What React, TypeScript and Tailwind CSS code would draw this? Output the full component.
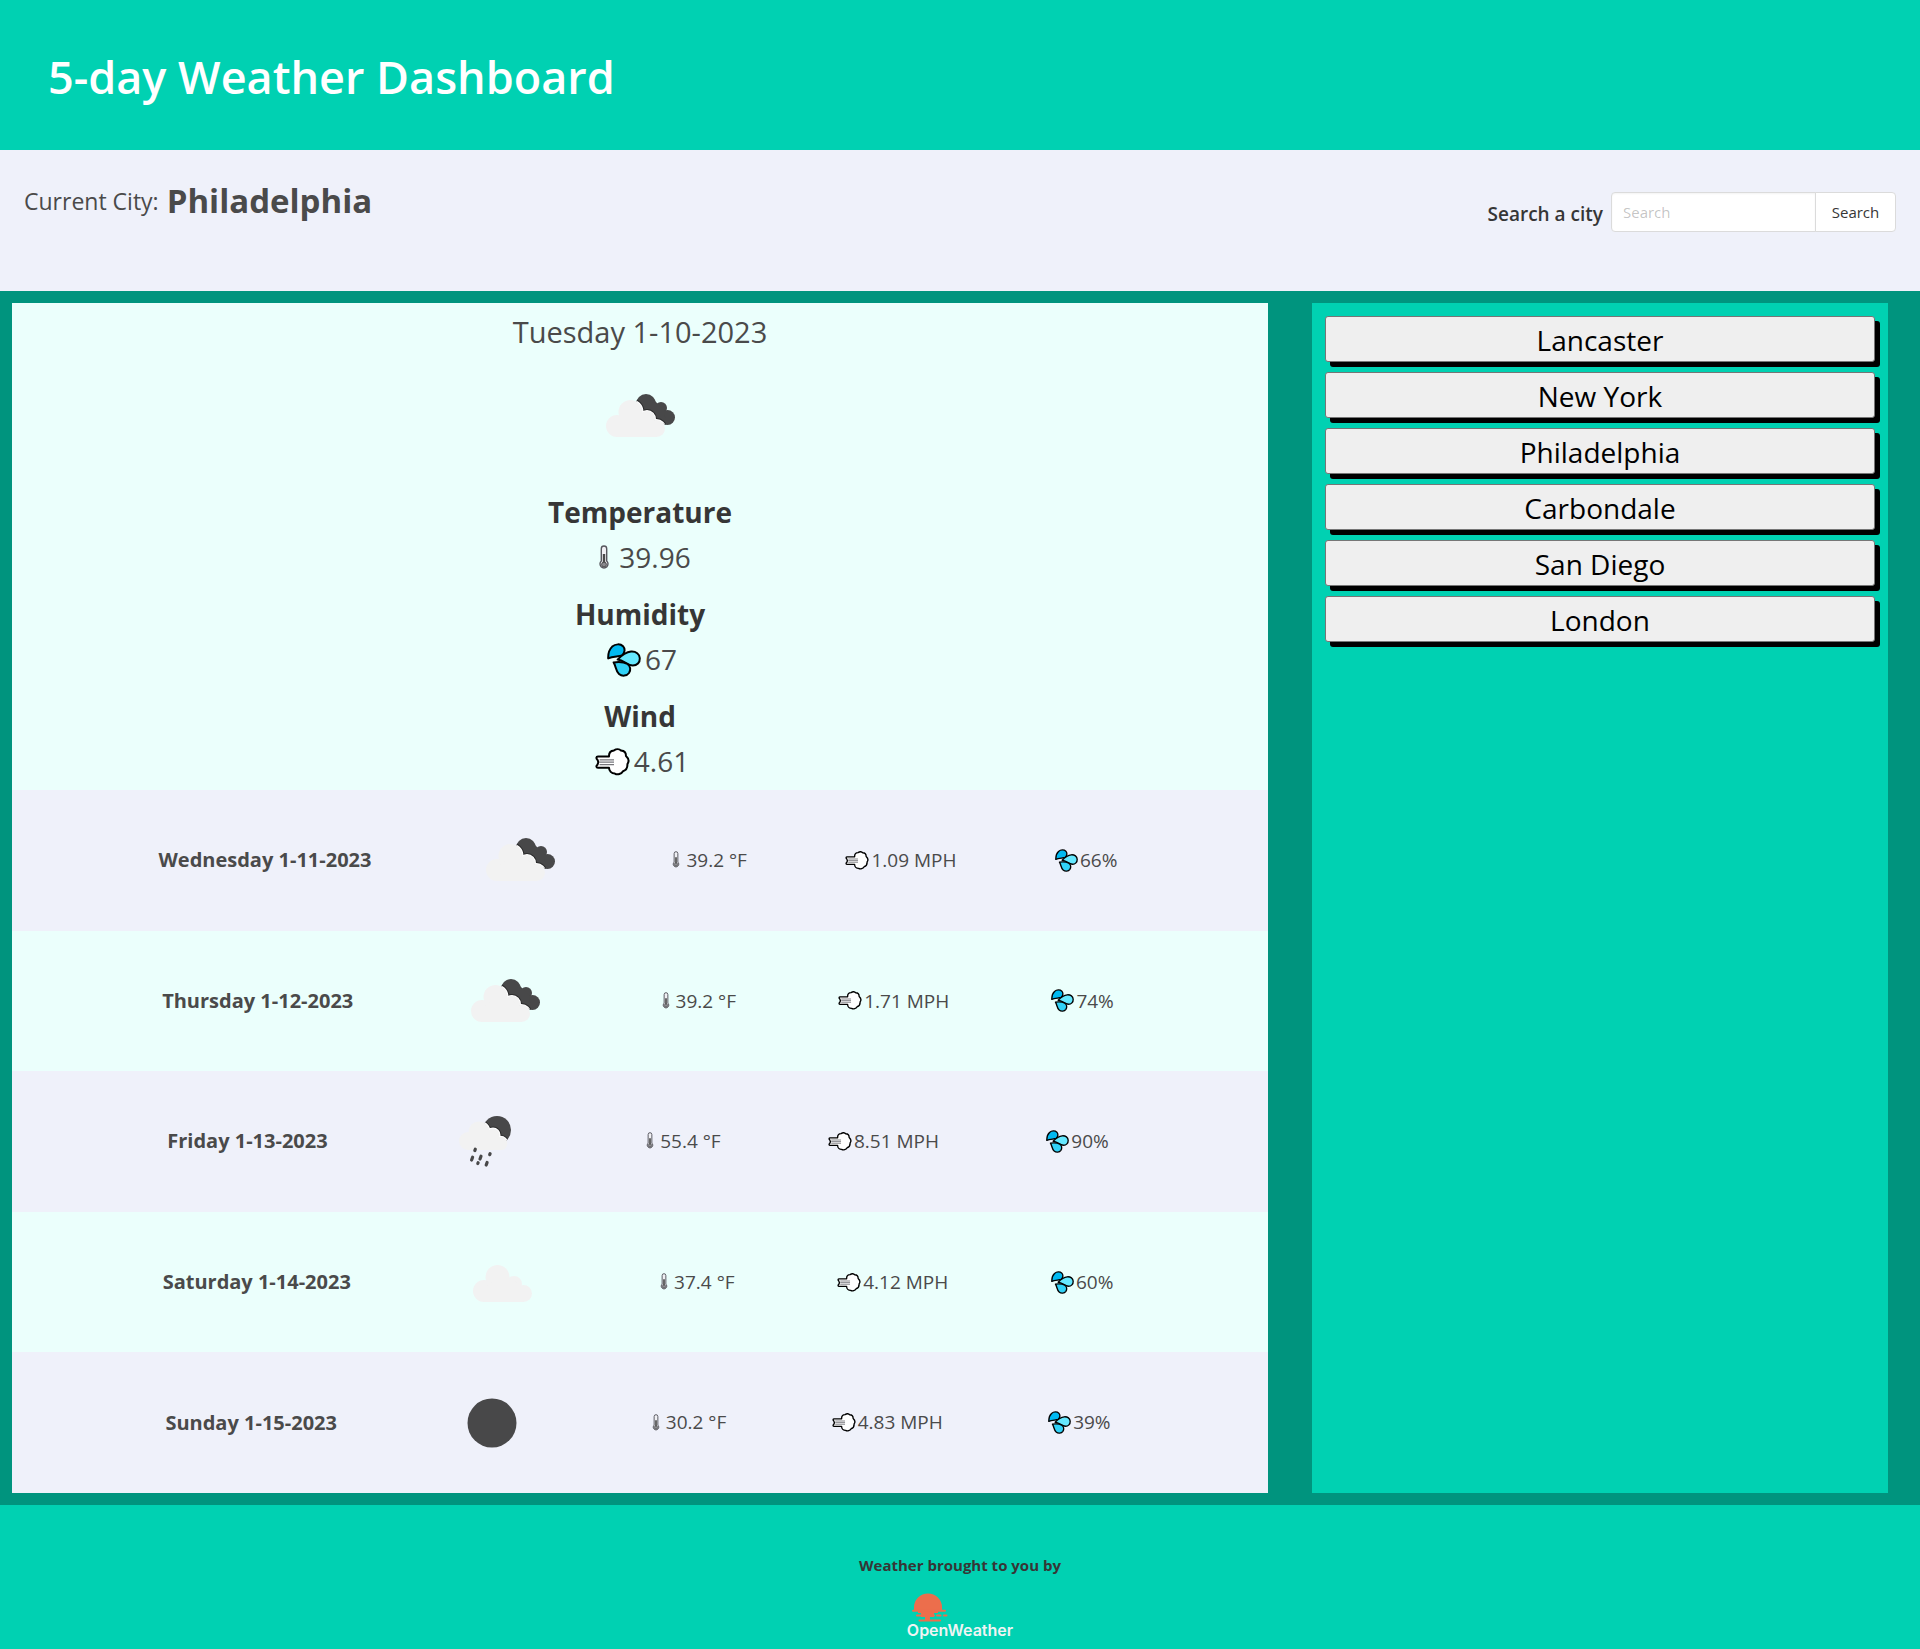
import type { ReactNode } from "react";

type Sky = "broken" | "cloud" | "rain" | "moon";

const cities = ["Lancaster", "New York", "Philadelphia", "Carbondale", "San Diego", "London"];

const forecast: { date: string; sky: Sky; temp: string; wind: string; humidity: string }[] = [
  { date: "Wednesday 1-11-2023", sky: "broken", temp: "39.2", wind: "1.09", humidity: "66" },
  { date: "Thursday 1-12-2023", sky: "broken", temp: "39.2", wind: "1.71", humidity: "74" },
  { date: "Friday 1-13-2023", sky: "rain", temp: "55.4", wind: "8.51", humidity: "90" },
  { date: "Saturday 1-14-2023", sky: "cloud", temp: "37.4", wind: "4.12", humidity: "60" },
  { date: "Sunday 1-15-2023", sky: "moon", temp: "30.2", wind: "4.83", humidity: "39" },
];

function BigCloud() {
  return (
    <>
      <circle cx="27" cy="60" r="11" />
      <circle cx="40.5" cy="46" r="12" />
      <circle cx="57" cy="53" r="8" />
      <circle cx="66.5" cy="62.5" r="8.5" />
      <path d="M27 71H66.5V58L56 48H38L27 58Z" />
    </>
  );
}

function DarkPuffs() {
  return (
    <>
      <circle cx="56" cy="38" r="10" />
      <circle cx="71" cy="42" r="6" />
      <circle cx="77.5" cy="51.5" r="7.5" />
      <path d="M56 48L64 34L74 44L76 58L66 55Z" />
    </>
  );
}

function RainCloud() {
  return (
    <>
      <circle cx="30" cy="50" r="9" />
      <circle cx="41" cy="41" r="10.5" />
      <circle cx="55" cy="44" r="6.5" />
      <circle cx="62.5" cy="52.5" r="6.8" />
      <path d="M30 59H62.5V47L54 40H40L30 48Z" />
    </>
  );
}

function SkyIcon({ sky, id }: { sky: Sky; id: string }) {
  return (
    <svg viewBox="0 0 100 100" className="size-[100px] shrink-0" aria-hidden="true">
      {sky === "broken" && (
        <>
          <clipPath id={id}>
            <DarkPuffs />
          </clipPath>
          <g fill="#484849">
            <DarkPuffs />
          </g>
          <g clipPath={`url(#${id})`}>
            <g fill="#2c2c2d" stroke="#2c2c2d" strokeWidth="4">
              <BigCloud />
            </g>
            <g fill="#fff" stroke="#fff" strokeWidth="2">
              <BigCloud />
            </g>
          </g>
          <g fill="#f2f2f2">
            <BigCloud />
          </g>
        </>
      )}
      {sky === "cloud" && (
        <g fill="#f2f2f2" transform="translate(4 -1)">
          <BigCloud />
        </g>
      )}
      {sky === "moon" && <circle cx="50" cy="50" r="24.5" fill="#484849" />}
      {sky === "rain" && (
        <g transform="translate(3 0)">
          <clipPath id={id}>
            <circle cx="59" cy="39" r="14" />
          </clipPath>
          <circle cx="59" cy="39" r="14" fill="#484849" />
          <g clipPath={`url(#${id})`}>
            <g fill="#2c2c2d" stroke="#2c2c2d" strokeWidth="4">
              <RainCloud />
            </g>
            <g fill="#fff" stroke="#fff" strokeWidth="2">
              <RainCloud />
            </g>
          </g>
          <g fill="#f2f2f2">
            <RainCloud />
          </g>
          <g stroke="#484849" strokeWidth="3.2" strokeLinecap="round">
            <path d="M37.3 58.2L36.8 59.6M34.6 66.2L33.6 69M43 65.2L42 68M52.1 62.7L51.7 63.7M40.1 71.7L39.8 72.5M49.1 71.4L48.2 74" />
          </g>
        </g>
      )}
    </svg>
  );
}

function Thermometer({ className }: { className: string }) {
  return (
    <svg viewBox="0 0 10 26" className={className} fill="none" aria-hidden="true">
      <path d="M2.3 16V3.7a2.7 2.7 0 0 1 5.4 0V16a4 4 0 1 1-5.4 0Z" fill="#f0f0f4" stroke="#57575e" strokeWidth="1.4" />
      <path d="M5 9v10" stroke="#4a4a4a" strokeWidth="2.4" />
      <circle cx="5" cy="19.5" r="2.4" fill="#8b8b90" stroke="#4a4a4a" />
    </svg>
  );
}

function Droplets({ className }: { className: string }) {
  return (
    <svg viewBox="0 0 34 34" className={className} stroke="#000" strokeWidth="2" strokeLinejoin="round" aria-hidden="true">
      <path d="M1.2 15.4C1 10.5 2.4 6.3 5.2 3.6C8.5.8 13.4.6 16 3.2C18.5 6 17.8 10 15 12.4C11.5 13.8 6 13.2 1.2 15.4Z" fill="#00b9f1" />
      <path d="M10.6 16.6C14 13 18.6 9.1 24 8.6C29 8.2 32.6 11 32.8 15.2C33 19.6 30 22.6 25.8 22.6C20.5 22.4 17 17.4 10.6 16.6Z" fill="#66e8ff" />
      <path d="M6.6 19.4C12 18.6 17 19 20.4 21C23.6 23 24 27 22 30C19.8 33 15.2 33.6 12 31C8.6 28.2 9.2 23.4 6.6 19.4Z" fill="#31d2f7" />
    </svg>
  );
}

function Gust({ className }: { className: string }) {
  return (
    <svg viewBox="0 0 35 28" className={className} stroke="#000" strokeWidth="2" strokeLinejoin="round" strokeLinecap="round" aria-hidden="true">
      <path
        d="M14 8.6C13.8 5 15.8 2.6 19 2.4C21.4.8 24.4.8 26 2.6C29 2.8 31 5 31 8C33.6 10.4 34.2 13.6 32.4 16C32.6 19.4 31 22.4 28 23.2C26.4 26 22.6 27.2 19.8 25.6C16.6 25.6 14 23 14 19.8H3C1 19.8 1 17.6 2.4 16.8L3.4 14.2L2.4 11.6C1 10.6 1 8.6 3 8.6Z"
        fill="#fff"
      />
      <path d="M4.6 11.8H19M4.6 14.2H19M4.6 16.6H19" stroke="#77777c" strokeWidth="1.3" strokeLinecap="butt" />
    </svg>
  );
}

function CurrentReading({ title, children }: { title: string; children: ReactNode }) {
  return (
    <section className="flex flex-col items-center">
      <h2 className="font-bold text-[#363636]">{title}</h2>
      <p className="flex items-center">{children}</p>
    </section>
  );
}

export default function App() {
  return (
    <div className="flex min-h-screen flex-col bg-[#00947e] font-['Open_Sans','Noto_Sans',sans-serif] text-[#4a4a4a]">
      <header className="flex h-[150px] items-center bg-[#00d1b2] px-12 pt-1">
        <h1 className="text-[45px] font-semibold text-white">5-day Weather Dashboard</h1>
      </header>

      <div className="flex h-[141px] items-start justify-between bg-[#eff1fa] px-6 pt-6">
        <p className="flex items-center gap-2 text-[23px]">
          Current City: <strong className="text-[33px] leading-[54px] font-bold">Philadelphia</strong>
        </p>
        <form className="flex items-center pt-[18px]" onSubmit={(e) => e.preventDefault()}>
          <label htmlFor="city" className="pt-1 pr-2 text-[19px] font-semibold text-[#363636]">
            Search a city
          </label>
          <input
            id="city"
            type="text"
            placeholder="Search"
            className="h-10 w-[205px] rounded-l border border-[#dbdbdb] bg-white px-[11px] text-[15px] shadow-[inset_0_1px_2px_rgba(10,10,10,0.05)] outline-none placeholder:text-[#363636]/30"
          />
          <button type="submit" className="-ml-px h-10 w-[81px] rounded-r border border-[#dbdbdb] bg-white text-[15px] text-[#363636]">
            Search
          </button>
        </form>
      </div>

      <main className="grid flex-1 grid-cols-[1256fr_576fr] gap-11 py-3 pr-8 pl-3 text-[28px]">
        <div className="flex flex-col bg-[#ebfffc]">
          <div className="flex flex-col items-center pt-1.5 pb-1.5 leading-[45px]">
            <p className="text-[29px]">Tuesday 1-10-2023</p>
            <div className="pt-3 pb-6">
              <SkyIcon sky="broken" id="today" />
            </div>
            <div className="flex flex-col gap-3">
              <CurrentReading title="Temperature">
                <Thermometer className="mr-2.5 ml-2.5 h-[26px] w-[10px]" />
                39.96
              </CurrentReading>
              <CurrentReading title="Humidity">
                <Droplets className="mr-1 ml-1 size-[34px]" />
                67
              </CurrentReading>
              <CurrentReading title="Wind">
                <Gust className="mr-1 ml-1 h-[28px] w-[35px]" />
                4.61
              </CurrentReading>
            </div>
          </div>
          <ul className="grid flex-1 auto-rows-fr text-[19px]">
            {forecast.map((day) => (
              <li key={day.date} className="flex items-center justify-evenly px-12 py-5 odd:bg-[#eff1fa]">
                <span className="text-xl font-bold">{day.date}</span>
                <SkyIcon sky={day.sky} id={day.date.split(" ")[0]} />
                <span className="flex items-center">
                  <Thermometer className="mr-1.5 ml-1 h-[18px] w-[8px]" />
                  {day.temp} °F
                </span>
                <span className="flex items-center">
                  <Gust className="mr-0.5 h-[19px] w-[24px]" />
                  {day.wind} MPH
                </span>
                <span className="flex items-center pr-1">
                  <Droplets className="mr-0.5 size-[23px]" />
                  {day.humidity}%
                </span>
              </li>
            ))}
          </ul>
        </div>
        <aside className="flex flex-col gap-2.5 bg-[#00d1b2] p-[13px]">
          {cities.map((city) => (
            <button
              key={city}
              type="button"
              className="h-[46px] rounded-[3px] border border-[#767676] bg-[#efefef] pt-0.5 leading-[42px] text-black shadow-[5px_5px_0_#000]"
            >
              {city}
            </button>
          ))}
        </aside>
      </main>

      <footer className="flex h-36 flex-col items-center bg-[#00d1b2] pt-12">
        <p className="text-[15px] leading-6 font-bold text-[#363636]">Weather brought to you by</p>
        <a href="#openweather" className="flex flex-col pt-4">
          <svg viewBox="0 0 38 29" className="ml-1 h-[29px] w-[38px]" aria-hidden="true">
            <path d="M3 17.5V14.5a14 14 0 0 1 28 0V17.5Z" fill="#ec6e4c" />
            <path d="M7 17h20v3h-4v4h-4v3h-5v-3h-4v-4H7Z" fill="#ec6e4c" />
            <path d="M2 17.8H34M6 22.4H23M26 22.4H29.5M33 22.4H35.5M8.5 27.4H29" stroke="#ec6e4c" strokeWidth="2" strokeLinecap="round" />
          </svg>
          <span className="font-['Inter',sans-serif] text-base leading-4 font-semibold text-[#f0f4f4]">OpenWeather</span>
        </a>
      </footer>
    </div>
  );
}
